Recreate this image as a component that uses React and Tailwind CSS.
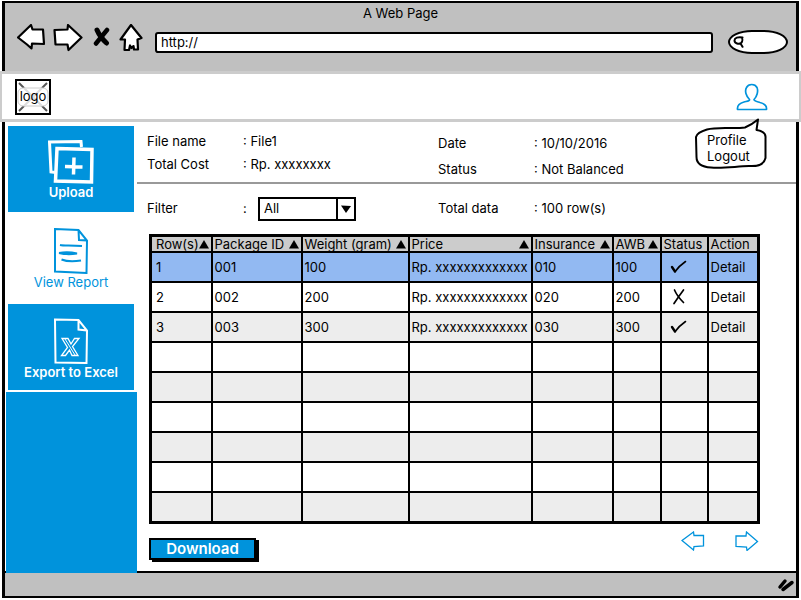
import React from "react";

const BLUE = "#0093dc";

const files = [
  { row: "1", id: "001", weight: "100", price: "Rp. xxxxxxxxxxxxx", insurance: "010", awb: "100", ok: true },
  { row: "2", id: "002", weight: "200", price: "Rp. xxxxxxxxxxxxx", insurance: "020", awb: "200", ok: false },
  { row: "3", id: "003", weight: "300", price: "Rp. xxxxxxxxxxxxx", insurance: "030", awb: "300", ok: true },
];

const columns = [
  { label: "Row(s)", sortable: true, width: "w-[61px]" },
  { label: "Package ID", sortable: true, width: "w-[90px]" },
  { label: "Weight (gram)", sortable: true, width: "w-[107px]" },
  { label: "Price", sortable: true, width: "w-auto" },
  { label: "Insurance", sortable: true, width: "w-[81px]" },
  { label: "AWB", sortable: true, width: "w-[48px]" },
  { label: "Status", sortable: false, width: "w-[47px]" },
  { label: "Action", sortable: false, width: "w-[51px]" },
];

function BackIcon() {
  return (
    <svg width="28" height="28" viewBox="0 0 28 28" fill="#fff" stroke="#000" strokeWidth="2.200" strokeLinejoin="round">
      <path d="M1 13.500 L14 1 L15.500 5.500 L26 5.500 L27 20 L15 19.500 L14.500 24.500 L10 20.500 Z" />
    </svg>
  );
}

function ForwardIcon() {
  return (
    <svg width="30" height="28" viewBox="0 0 30 28" fill="#fff" stroke="#000" strokeWidth="2.200" strokeLinejoin="round">
      <path d="M1.500 6 L14.500 5.500 L15 1 L28.500 13.500 L15.500 26 L14.500 20.500 L2.500 20.500 Z" />
    </svg>
  );
}

function StopIcon() {
  return (
    <svg width="18" height="22" viewBox="0 0 18 22" fill="none" stroke="#000" strokeLinecap="round">
      <path d="M4 3 Q7 10 13.500 16" strokeWidth="5" />
      <path d="M14 3 Q9 9 3 16.500" strokeWidth="4.500" />
    </svg>
  );
}

function HomeIcon() {
  return (
    <svg width="24" height="28" viewBox="0 0 24 28" fill="#fff" stroke="#000" strokeWidth="2.200" strokeLinejoin="round">
      <path d="M12 1 L22.500 14 L18.500 15.500 L19 25.500 L15 25.500 L14.500 22 L12.500 24 L11 21.500 L10 26 L5.500 26 L6 15.500 L1.500 15.500 Z" />
    </svg>
  );
}

function SearchIcon() {
  return (
    <svg width="12" height="12" viewBox="0 0 12 12" fill="none" stroke="#000" strokeWidth="2" strokeLinecap="round">
      <path d="M9.500 1.500 C5 0.500 1.500 2 1.500 4.500 C1.500 7.500 6 8.800 8.300 6.800 C9.500 5.500 9.500 3 9 2 M7.500 7.500 L9.500 10.800" />
    </svg>
  );
}

function UserIcon() {
  return (
    <svg width="32" height="28" viewBox="0 0 32 28" fill="none" stroke={BLUE} strokeWidth="1.700" strokeLinejoin="round">
      <path d="M1.500 26.500 C1 22 4 20 8 19 C11 18.200 14 18 13.500 16.500 C10 13 8.500 8 10.500 4.500 C12.500 0.500 19 0.500 21 4.500 C22.500 8 21 13.500 18 16.500 C18 18 20 18.300 24 19.500 C28.500 20.700 31 22.500 30.500 26.500 Z" />
    </svg>
  );
}

function UploadIcon() {
  return (
    <svg width="46" height="44" viewBox="0 0 46 44" fill="none" stroke="#fff">
      <path d="M8 32.500 L3 32 L1.500 2 L33 1.500 L33.500 7" strokeWidth="3" />
      <path d="M9 8.500 L44 9.500 L43.500 42 L7.500 41 Z" fill={BLUE} strokeWidth="3.500" />
      <path d="M26 17.500 L25.500 34.500 M17 26.500 L34.500 27" strokeWidth="3.500" />
    </svg>
  );
}

function ReportIcon() {
  return (
    <svg width="36" height="46" viewBox="0 0 36 46" fill="none" stroke={BLUE} strokeWidth="2">
      <path d="M2 1 L25.500 2 L34 12.500 L33.500 45 L2 43.500 Z M25.500 2 L26 12 L34 12.500" />
      <path d="M7 17 C11 18 18 17 29 18" />
      <path d="M6 25 Q15 23.500 24 25.500 Q14 27 6 25" />
      <path d="M8.500 31.500 Q16 34.500 28 32.500" />
    </svg>
  );
}

function ExcelIcon() {
  return (
    <svg width="36" height="46" viewBox="0 0 36 46" fill="none" stroke="#fff" strokeWidth="2">
      <path d="M2 1.500 L25.500 2 L34 12.500 L33.500 45 L2.500 44.500 Z M25.500 2 L25.500 11.500 L34 12.500" />
      <path
        d="M9 20.500 H15 L18 26 L21.500 20.500 H26 L19.500 28.500 L25 37.500 H19 L16.500 32 L12.500 37.500 H8.500 L14.500 29.500 Z"
        strokeWidth="1.300"
      />
      <path d="M12 21 L22 37" strokeWidth="1" />
    </svg>
  );
}

function CheckMark() {
  return (
    <svg role="img" aria-label="Balanced" className="ml-1.5" width="18" height="16" viewBox="0 0 18 16" fill="none" stroke="#000" strokeLinecap="round">
      <path d="M2 8 L5 12.500" strokeWidth="2.400" />
      <path d="M5.200 12.500 Q9 7 15.500 2.500" strokeWidth="1.600" />
    </svg>
  );
}

function CrossMark() {
  return (
    <svg role="img" aria-label="Not balanced" className="ml-2" width="16" height="18" viewBox="0 0 16 18" fill="none" stroke="#000" strokeWidth="1.700" strokeLinecap="round">
      <path d="M2.500 2 Q5 8 11.500 14.500 M11.500 2 Q7 8 2 15.500" />
    </svg>
  );
}

function BrowserBar() {
  return (
    <div className="mx-0.5 mt-px h-[70px] border-x-[3px] border-t-2 border-black bg-[#c0c0c0]">
      <p className="text-center leading-5">A Web Page</p>
      <div className="mt-px flex h-7 items-center pr-2 pl-3">
        <button type="button" aria-label="Back"><BackIcon /></button>
        <button type="button" aria-label="Forward" className="ml-2"><ForwardIcon /></button>
        <button type="button" aria-label="Stop" className="ml-2.5"><StopIcon /></button>
        <button type="button" aria-label="Home" className="ml-2"><HomeIcon /></button>
        <input
          aria-label="Address"
          defaultValue="http://"
          className="mt-2 ml-3 h-[21px] min-w-0 flex-1 rounded-[3px] border-2 border-black bg-white px-1 leading-4 outline-none"
        />
        <label className="mt-2 ml-[15px] flex h-6 w-[60px] items-center rounded-[40%/50%] border-2 border-black bg-white pl-[3px]">
          <SearchIcon />
          <input aria-label="Search" className="w-9 bg-transparent outline-none" />
        </label>
      </div>
    </div>
  );
}

function SiteHeader() {
  return (
    <header className="relative z-10 flex h-[51px] items-center justify-between border-x-2 border-y-[3px] border-[#ccc] bg-white pr-[31px] pl-[13px]">
      <a href="#home" className="relative flex size-9 items-center justify-center border-2 border-black">
        <svg className="absolute inset-0" width="32" height="32" viewBox="0 0 32 32" fill="none" strokeWidth="2">
          <path d="M2 2 L30 30 M30 2 L2 30" stroke="#555" />
          <rect x="1" y="7" width="30" height="18" rx="5" fill="#fff" stroke="#ccc" strokeWidth="1" />
          <path d="M7 7 L25 25 M25 7 L7 25" stroke="#ddd" />
        </svg>
        <span className="relative">logo</span>
      </a>
      <button type="button" aria-label="Account"><UserIcon /></button>
      <nav aria-label="Account" className="absolute top-11 right-8 h-[52px] w-[72px] pt-3.5 pl-3">
        <svg className="absolute inset-0" width="72" height="52" viewBox="0 0 72 52" fill="#fff" stroke="#000" strokeWidth="2" strokeLinejoin="round">
          <path d="M12 11.500 C22 8.500 38 11 50 9.500 C56 7 60 4 63 1.500 L61.500 12 C68 13 71 16 70.500 20 L70.500 40 C69 47 61 48.500 54 48 C40 48.500 28 50.500 16 49.500 C7 49 1.500 46 1.500 39 L1 19 C2 15 7 13 12 11.500 Z" />
        </svg>
        <ul className="relative leading-4">
          <li><a href="#profile">Profile</a></li>
          <li><a href="#logout">Logout</a></li>
        </ul>
      </nav>
    </header>
  );
}

function Sidebar() {
  return (
    <nav aria-label="Main" className="relative z-10 -mb-0.5 flex w-[132px] shrink-0 flex-col pt-1 pl-px leading-4 font-semibold">
      <a href="#upload" className="mr-[3px] ml-0.5 flex h-[86px] flex-col items-center bg-[#0093dc] pt-3.5 text-white">
        <UploadIcon />
        <span>Upload</span>
      </a>
      <a href="#report" className="mr-[3px] ml-0.5 flex h-[92px] flex-col items-center bg-white pt-4 font-normal text-[#0093dc]">
        <ReportIcon />
        <span>View Report</span>
      </a>
      <a href="#excel" className="mr-[3px] ml-0.5 flex h-[86px] flex-col items-center bg-[#0093dc] pt-3.5 text-white">
        <ExcelIcon />
        <span>Export to Excel</span>
      </a>
      <div className="mt-0.5 flex-1 bg-[#0093dc]" />
    </nav>
  );
}

function Detail({ label, value }) {
  return (
    <div className="flex">
      <dt className="w-24">{label}</dt>
      <dd>: {value}</dd>
    </div>
  );
}

function Summary() {
  return (
    <>
      <section className="flex h-[60px] pl-2.5 leading-[23px]">
        <dl className="w-[291px] pt-2">
          <Detail label="File name" value="File1" />
          <Detail label="Total Cost" value="Rp. xxxxxxxx" />
        </dl>
        <dl className="pt-2 leading-[26px]">
          <Detail label="Date" value="10/10/2016" />
          <Detail label="Status" value="Not Balanced" />
        </dl>
      </section>
      <hr className="border-t-2 border-[#999]" />
      <section className="flex h-[50px] items-center pb-px pl-2.5">
        <div className="flex w-[291px] items-center">
          <label htmlFor="filter" className="w-24">Filter</label>
          <span className="w-[15px]">:</span>
          <div className="relative">
            <select id="filter" className="block h-6 w-[98px] appearance-none border-2 border-black bg-white pl-1 outline-none">
              <option>All</option>
            </select>
            <span className="pointer-events-none absolute inset-y-0 right-0 flex w-5 items-center justify-center border-2 border-black">
              <svg width="10" height="8" viewBox="0 0 10 8">
                <path d="M0 0.500 L10 1 L5 8 Z" />
              </svg>
            </span>
          </div>
        </div>
        <dl>
          <Detail label="Total data" value="100 row(s)" />
        </dl>
      </section>
    </>
  );
}

function ReportTable() {
  const cell = "border-2 border-black pl-0.5 whitespace-nowrap";
  return (
    <table className="w-full table-fixed border-collapse border-[3px] border-black text-left leading-5">
      <thead>
        <tr className="bg-[#ccc]">
          {columns.map((column, i) => (
            <th key={column.label} scope="col" className={`border-2 border-black p-0 pl-0.5 font-normal whitespace-nowrap ${column.width}`}>
              {column.sortable ? (
                <button type="button" className={`flex h-[14px] w-full items-center justify-between pr-0.5 ${i === 0 ? "pl-0.5" : ""}`}>
                  {column.label}
                  <svg className="shrink-0" width="10" height="9" viewBox="0 0 10 9">
                    <path d="M0 8.500 L5 0 L10 8.500 Z" />
                  </svg>
                </button>
              ) : (
                <span className="block h-[14px] leading-[14px]">{column.label}</span>
              )}
            </th>
          ))}
        </tr>
      </thead>
      <tbody>
        {files.map((file, i) => (
          <tr key={file.id} className={`h-[30px] ${i === 0 ? "bg-[#92b9f2]" : i % 2 ? "bg-white" : "bg-[#ededed]"}`}>
            <td className="border-2 border-black pl-1">{file.row}</td>
            <td className={cell}>{file.id}</td>
            <td className={cell}>{file.weight}</td>
            <td className={cell}>{file.price}</td>
            <td className={cell}>{file.insurance}</td>
            <td className={cell}>{file.awb}</td>
            <td className={cell}>{file.ok ? <CheckMark /> : <CrossMark />}</td>
            <td className={cell}><a href={`#detail-${file.id}`}>Detail</a></td>
          </tr>
        ))}
        {[3, 4, 5, 6, 7, 8].map((i) => (
          <tr key={i} className={`h-[30px] ${i % 2 ? "bg-white" : "bg-[#ededed]"}`}>
            {columns.map((column) => (
              <td key={column.label} className={cell} />
            ))}
          </tr>
        ))}
      </tbody>
    </table>
  );
}

function TableActions() {
  return (
    <div className="flex items-center justify-between pt-3.5 pb-2.5">
      <button type="button" className="h-[22px] w-[107px] border-2 border-black bg-[#0093dc] text-[15px] leading-4 font-semibold text-white shadow-[3px_2px_0_#000]">
        Download
      </button>
      <div className="-mt-4 flex gap-[30px] pr-px">
        <button type="button" aria-label="Previous page">
          <svg width="24" height="20" viewBox="0 0 24 20" fill="none" stroke={BLUE} strokeWidth="1.300">
            <path d="M1 9.500 L12.500 1 L13 4.500 L22.500 4.500 V15 L13 15.500 L12.500 19 Z" />
          </svg>
        </button>
        <button type="button" aria-label="Next page">
          <svg width="24" height="20" viewBox="0 0 24 20" fill="none" stroke={BLUE} strokeWidth="1.300">
            <path d="M1 5 H11 L11.500 1 L22.500 10.500 L12 19.500 L11.500 16 L1 15.500 Z" />
          </svg>
        </button>
      </div>
    </div>
  );
}

export default function App() {
  return (
    <div className="flex min-h-screen flex-col bg-white pb-0.5 font-['Inter','Liberation_Sans',sans-serif] text-[13px] text-black">
      <BrowserBar />
      <SiteHeader />
      <div className="mx-0.5 flex flex-1 border-x-[3px] border-black">
        <Sidebar />
        <main className="min-w-0 flex-1">
          <Summary />
          <div className="pr-9 pl-3">
            <ReportTable />
            <TableActions />
          </div>
        </main>
      </div>
      <footer className="mx-0.5 flex h-[27px] items-center justify-end border-x-[3px] border-y-2 border-black bg-[#c0c0c0] pr-px">
        <svg width="18" height="14" viewBox="0 0 18 14" fill="none" stroke="#000" strokeWidth="3.500" strokeLinecap="round">
          <path d="M3 9 L8 3 M6 11.500 L15 4.500" />
        </svg>
      </footer>
    </div>
  );
}
